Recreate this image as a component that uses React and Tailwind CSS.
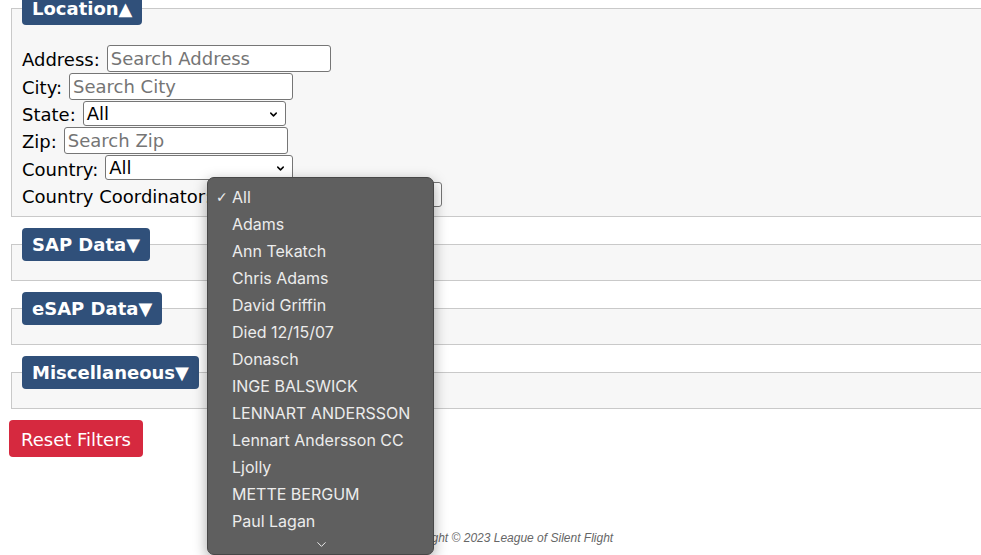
import React from "react";
import { ChevronDown } from "lucide-react";

const coordinators = [
  "All",
  "Adams",
  "Ann Tekatch",
  "Chris Adams",
  "David Griffin",
  "Died 12/15/07",
  "Donasch",
  "INGE BALSWICK",
  "LENNART ANDERSSON",
  "Lennart Andersson CC",
  "Ljolly",
  "METTE BERGUM",
  "Paul Lagan",
];

function SearchInput({ placeholder }) {
  return (
    <input
      type="text"
      placeholder={placeholder}
      className="w-[224px] h-[27px] border border-[#767676] rounded-[3px] bg-white px-[3px] text-[18px] placeholder:text-[#757575] outline-none"
    />
  );
}

function FakeSelect({ width }) {
  return (
    <span className={`relative inline-flex items-center h-[25px] border border-[#767676] rounded-[3px] bg-white ${width}`}>
      <span className="pl-[3px] pt-[1px] text-[18px] leading-none text-black">All</span>
      <ChevronDown size={11} strokeWidth={3.2} className="absolute right-[6px] top-[7px] text-black" />
    </span>
  );
}

function Section({ title, open, children, first }) {
  return (
    <fieldset
      className={`${first ? "-mt-[8px]" : "mt-[11px]"} mx-[2px] px-[10px] border border-[#c9c9c9] bg-[#f7f7f7]`}
    >
      <legend className="h-[33px] px-[10px] rounded-[4px] bg-[#30507a] text-white font-bold text-[18px] leading-[34px]">
        {title}
        {open ? "▲" : "▼"}
      </legend>
      {children ? children : <div className="h-[19px]" />}
    </fieldset>
  );
}

function Row({ label, h, children }) {
  return (
    <div className={`flex items-center gap-[7px] ${h}`}>
      <span className="pt-[3px]">{label}</span>
      {children}
    </div>
  );
}

export default function App() {
  return (
    <div
      className="relative w-[981px] h-[555px] overflow-hidden bg-white text-black"
      style={{ fontFamily: '"DejaVu Sans", Verdana, sans-serif' }}
    >
      <div className="w-[1010px] px-[9px]">
        <Section title="Location" open first>
          <div className="pt-[19px] pb-[8px] text-[18px] leading-[21px]">
            <Row label="Address:" h="h-[28px]">
              <SearchInput placeholder="Search Address" />
            </Row>
            <Row label="City:" h="h-[28px]">
              <SearchInput placeholder="Search City" />
            </Row>
            <Row label="State:" h="h-[26px]">
              <FakeSelect width="w-[203px]" />
            </Row>
            <Row label="Zip:" h="h-[28px]">
              <SearchInput placeholder="Search Zip" />
            </Row>
            <Row label="Country:" h="h-[27px]">
              <FakeSelect width="w-[188px]" />
            </Row>
            <Row label="Country Coordinator:" h="h-[27px]">
              <FakeSelect width="w-[224px]" />
            </Row>
          </div>
        </Section>
        <Section title="SAP Data" />
        <Section title="eSAP Data" />
        <Section title="Miscellaneous" />

        <button className="mt-[11px] h-[37px] px-[12px] pt-[1px] rounded-[4px] bg-[#d6293f] text-white text-[18px]">
          Reset Filters
        </button>

        <footer
          className="mt-[74px] text-center text-[12px] leading-[14px] italic text-[#666]"
          style={{ fontFamily: '"Liberation Sans", Arial, sans-serif' }}
        >
          Copyright © 2023 League of Silent Flight
        </footer>
      </div>

      {/* open dropdown for Country Coordinator */}
      <div
        className="absolute left-[207px] top-[177px] w-[227px] h-[378px] rounded-[7px] border border-[#474747] bg-[#5f5f5f] shadow-[0_4px_14px_rgba(0,0,0,0.35)] pt-[6px] text-[16px] text-[#ececec]"
        style={{ fontFamily: 'Inter, "Liberation Sans", sans-serif' }}
      >
        {coordinators.map((name, i) => (
          <div key={name} className="relative h-[27px] leading-[27px] pl-[24px]">
            {i === 0 && (
              <span className="absolute left-[8px] top-0 text-[14px]" style={{ fontFamily: '"DejaVu Sans", sans-serif' }}>
                ✓
              </span>
            )}
            {name}
          </div>
        ))}
        <div className="flex justify-center pl-[2px] pt-[2px]">
          <ChevronDown size={15} strokeWidth={1.6} className="text-[#ececec]" />
        </div>
      </div>
    </div>
  );
}
